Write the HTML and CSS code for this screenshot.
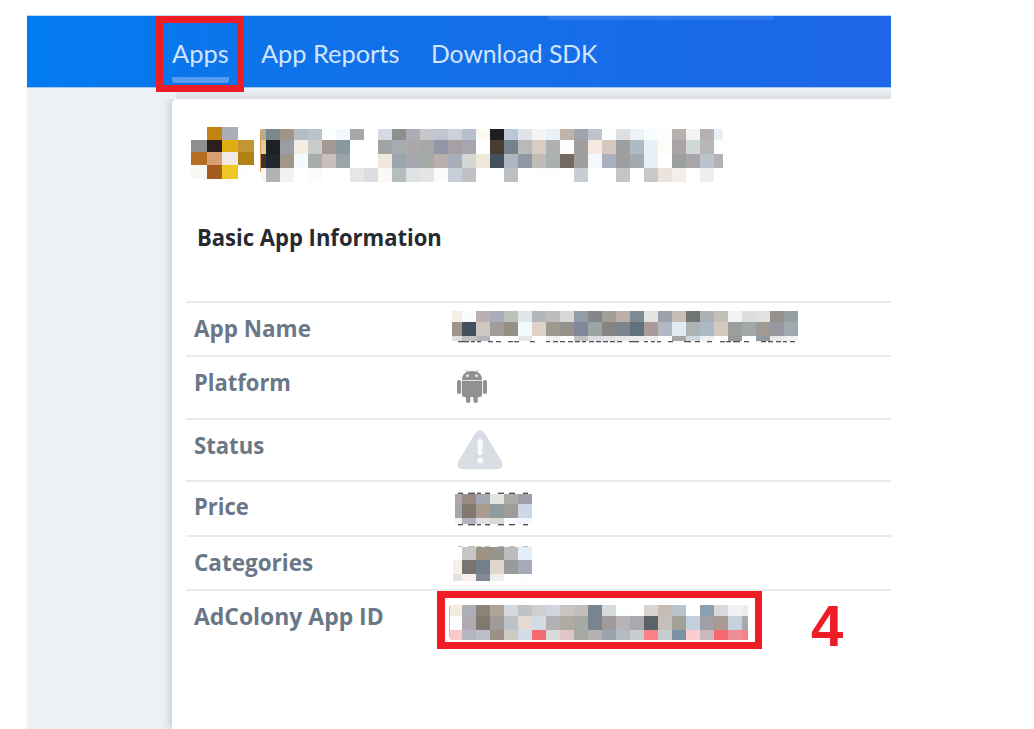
FILE: index.html
```html
<!DOCTYPE html>
<html lang="en">
<head>
<meta charset="utf-8">
<title>Basic App Information</title>
<link rel="stylesheet" href="styles.css">
</head>
<body>
<div class="shot">
  <nav class="nav">
    <span class="nav-item active"><span class="fit f-apps">Apps</span></span>
    <span class="nav-item reports"><span class="fit f-reports">App Reports</span></span>
    <span class="nav-item sdk"><span class="fit f-sdk">Download SDK</span></span>
    <i class="nav-pill"></i>
    <i class="mark mark-nav"></i>
  </nav>
  <div class="content">
    <i class="top-shade"></i>
    <main class="card">
      <header class="title">
        <svg class="logo" id="logo"></svg>
        <svg class="name" id="name"></svg>
      </header>
      <h2 class="heading"><span class="fit f-basic">Basic App Information</span></h2>
      <section class="rows">
        <div class="row r-name"><span class="label"><span class="fit f-name">App Name</span></span><svg class="value" id="appname"></svg></div>
        <div class="row r-platform"><span class="label"><span class="fit f-platform">Platform</span></span>
          <svg class="value" width="32" height="36" viewBox="0 0 32 36" fill="#8f9192">
            <path d="M6 12C6 6 10 3 16 3S26 6 26 12Z"/><path d="M11 4 10 1.5M21 4l1-2.5" stroke="#b9bbbc" stroke-width="1"/>
            <circle cx="11.5" cy="7.7" r="1.2" fill="#fff"/><circle cx="20.5" cy="7.7" r="1.2" fill="#fff"/>
            <path d="M6 12.7H26V27Q26 29 24 29H8Q6 29 6 27Z"/>
            <rect x="1" y="12" width="4.2" height="14" rx="2"/><rect x="26.8" y="12" width="4.2" height="14" rx="2"/>
            <rect x="10" y="26" width="4.4" height="9" rx="2"/><rect x="17.4" y="26" width="4.4" height="9" rx="2"/>
          </svg></div>
        <div class="row r-status"><span class="label"><span class="fit f-status">Status</span></span>
          <svg class="value" width="46" height="40" viewBox="0 0 46 40">
            <path d="M18 3.5Q23-2.8 28 3.5L44.5 31Q47.5 39 40 39.2H6Q-1.5 39 1.5 31Z" fill="#d8dde3"/>
            <path d="M20.3 9.5H26L25.2 25H21.1Z" fill="#f8fafb"/><circle cx="23.2" cy="30.5" r="2.9" fill="#f8fafb"/>
          </svg></div>
        <div class="row r-price"><span class="label"><span class="fit f-price">Price</span></span><svg class="value" id="price"></svg></div>
        <div class="row r-cat"><span class="label"><span class="fit f-cat">Categories</span></span><svg class="value" id="cats"></svg></div>
        <div class="row r-id"><span class="label"><span class="fit f-id">AdColony App ID</span></span><svg class="value" id="appid"></svg><i class="mark mark-id"></i><b class="step">4</b></div>
      </section>
    </main>
  </div>
</div>
<script src="mosaic.js"></script>
</body>
</html>
```

FILE: styles.css
```css
* { box-sizing: border-box; }
body { margin: 0; background: #fff; overflow: hidden; font-family: "Open Sans", "Noto Sans", sans-serif; }
svg { display: block; overflow: visible; flex: none; }
.shot { width: 864px; height: 714px; margin: 15px 0 0 27px; display: flex; flex-direction: column; }
.nav { position: relative; flex: none; height: 73px; padding-left: 145px; display: flex; border-top: 1px solid #b9d6fb; border-bottom: 1px solid #a3c9f8; background: linear-gradient(90deg, #027bf0 0, #0b75ec 22%, #136fea 50%, #1d66e7 100%); color: #d3e5fd; font-family: Lato, sans-serif; font-size: 25px; line-height: 30px; }
.nav-item { display: block; padding-top: 22px; white-space: nowrap; }
.active { width: 57px; height: 67px; border-radius: 3px; background: linear-gradient(#559df3, #559df3) 0 61px / 57px 6px no-repeat; }
.reports { margin-left: 32px; width: 138px; }
.sdk { margin-left: 32px; width: 166px; }
.nav-pill { position: absolute; left: 521px; top: 0; width: 226px; height: 4px; background: #2e79ec; border-radius: 0 0 5px 5px; }
.mark { position: absolute; border: 7px solid #ee1c24; z-index: 2; }
.mark-nav { left: 129px; top: 0; width: 88px; height: 76px; }
.fit { display: inline-block; white-space: nowrap; transform-origin: 0 50%; }
.content { position: relative; flex: 1; background: #eef1f6; padding: 11px 0 0 145px; }
.top-shade { position: absolute; left: 149px; right: 0; top: 1px; height: 10px; background: linear-gradient(#eceff4, #dcdfe5); }
.card { position: relative; height: 100%; background: #fff; border-radius: 5px 0 0 0; box-shadow: -3px 0 8px rgba(70, 80, 100, .22); clip-path: inset(0 0 0 -16px); padding: 28px 0 0 14px; }
.title { display: flex; gap: 7px; padding-left: 5px; height: 55px; }
.name { margin-top: 2px; }
.heading { margin: 38px 0 0 11px; height: 35px; font-size: 24px; line-height: 34px; font-weight: 700; color: #272a30; }
.rows { margin-top: 46px; }
.row { position: relative; display: flex; align-items: flex-start; border-top: 2px solid #e7ebef; }
.label { width: 258px; padding-left: 8px; font-size: 24px; line-height: 34px; font-weight: 700; color: #6a7787; }
.r-name { height: 54px; padding-top: 8px; } .r-name .value { margin-left: 8px; }
.r-platform { height: 63px; padding-top: 8px; } .r-platform .value { margin: 3px 0 0 12px; }
.r-status { height: 62px; padding-top: 8px; } .r-status .value { margin: 2px 0 0 13px; }
.r-price { height: 55px; padding-top: 7px; } .r-price .value { margin: 5px 0 0 11px; }
.r-cat { height: 54px; padding-top: 8px; } .r-cat .value { margin: 2px 0 0 9px; }
.r-id { height: 60px; padding-top: 8px; } .r-id .value { margin: 6px 0 0 6px; }
.mark-id { left: 251px; top: 0; width: 325px; height: 58px; border-width: 7px 7px 7px 8px; }
.step { position: absolute; left: 625px; top: 3px; font: bold 58px/64px "Liberation Sans", sans-serif; color: #ee1c24; }
```

FILE: mosaic.js
```js
// xs / ys are the cell edges; each row lists six-digit colours, "-" leaves a gap.
function mosaic(id, xs, ys, rows, marks) {
  const svg = document.getElementById(id);
  svg.setAttribute("width", xs[xs.length - 1] - xs[0]);
  svg.setAttribute("height", ys[ys.length - 1] - ys[0]);
  let out = "";
  (marks || []).forEach(m => {
    out += `<rect x="${m[0] - xs[0]}" y="${m[1] - ys[0]}" width="${m[2]}" height="${m[3]}" fill="${m[4] || "#555"}"/>`;
  });
  rows.forEach((row, r) => row.split(" ").forEach((c, i) => {
    if (c !== "-") out += `<rect x="${xs[i] - xs[0]}" y="${ys[r] - ys[0]}" width="${xs[i + 1] - xs[i]}" height="${ys[r + 1] - ys[r]}" fill="#${c}" shape-rendering="crispEdges"/>`;
  }));
  svg.innerHTML = out;
}
function edges(start, end) {
  const a = [start];
  for (let x = Math.floor(start / 14) * 14 + 14; x < end; x += 14) a.push(x);
  a.push(end);
  return a;
}
mosaic("logo", [191, 207, 222, 238, 254], [127, 140, 152, 165, 179], [
  "- c18312 abaeb8 -",
  "8f8f8d 2c1f1c dfae12 c39533",
  "b56d20 d79e70 f2e8e5 b38112",
  "f9f8f4 a35c1b edc825 fefefe"
]);
mosaic("name", edges(261, 723), edges(129, 182), [
  "b5ab9d 7b878c a19589 b5bdc4 bac4ca fdfefe f2f9fc a9a7a8 ffffff d6dbe3 8f8f8d aeadb5 c8c6c8 bfc5d1 ced1db b7bfcf fcf8f3 1e1f21 bbc6d6 dfe3ea f6f3f2 e9f1f8 bfb3ab 9fa5ae c1c3cc fbffff dfdfe0 edf2f6 f7fcfd fdfefe b8afae f3f3f3 b5b2b6 e9eef7",
  "e4cb9c 1d2224 9a9ca6 f4ebe2 c8cbc8 a29995 8a989f ffffff ffffff 9fa4a5 a5abae aaa8a9 a5a9a5 9397a5 a4a0a4 a7a5ad ffffff 473d30 73828d b9bab8 d7cdc5 b0b0b0 fffefd 9f9f9f f5eae1 d6c7bf 9d9fa0 adbbc5 e8f0f8 fcfdf7 a9a3a3 d0d9d9 b9b5b4 fbfdff",
  "3d352c 20272e a19689 f5faff a7aca8 cbbfbb 99a6a9 ffffff ffffff f1e8dd 9ba5ae a9a7b0 a5aaa7 b9afaf a8afbb d6d6d3 f1e8dc 43515e aeb6c1 9197a3 c0bcb7 a9b0af 736960 9f9f9f f2f8fd abb0be 9f9fa0 a4aaad e8f0f8 ffffff 9aa09f aaa5a8 bbc3cc b4b1b5",
  "fbf6f0 b0b3b3 f1f1f1 ffffff fbfbfb ffffff ffffff e6e6e7 dcdde2 faf9f5 b6bebd dee2e4 e4e6e6 f9fcfb c6ced7 c1c0c5 ffffff ffffff bbc0c4 ffffff fefefe fefefe ffffff c8ccd5 ffffff ffffff c4c5c4 ffffff c7c8c8 ece3dd f3efec ffffff f1eded ffffff"
], [[260, 130, 1, 42, "#d99b48"]]);
const dashes = [458, 11, 471, 4, 477, 4, 488, 5, 496, 5, 508, 5, 514, 5, 530, 5, 546, 4, 553, 5, 560, 5, 568, 5, 575, 5, 582, 4, 589, 5, 596, 5, 603, 5, 610, 5, 617, 5, 629, 10, 644, 4, 651, 4, 657, 4, 668, 5, 684, 7, 695, 5, 707, 5, 720, 5, 726, 5, 733, 7, 744, 5, 761, 5, 768, 5, 776, 5, 783, 4, 790, 5];
const nameMarks = [];
for (let i = 0; i < dashes.length; i += 2) nameMarks.push([dashes[i], 341, dashes[i + 1], 1.3]);
mosaic("appname", edges(452, 798), [311, 322, 336, 341], [
  "f4efe4 fafafa bab0af a9adb9 bdbfb9 e0e6e7 b1b6ba bfbcbf d8d8d9 919da7 858689 a29e9a bbaea6 7d8b94 e4e4e2 9ba2ae c7beb3 717575 adb1b1 c2bfb8 f2f2f2 dcdddf e2e2e2 95918c 969fa0",
  "9f938a 43515e cfc6c2 9f9c9a 949184 f2f9fc dfd1c7 9e9a8f 97918d 7f8798 99a5a3 858480 7c858d 61717d a99c98 b4b7c5 e0ecf2 adb2b2 acbac5 d2cabf 9b9e9b a2a8aa a09b92 9798a2 a0a9b0",
  "dfdddd c3bec0 b7b3bf ffffff ffffff e3e7e6 ffffff f1f1f1 ffffff c7c1be dadde2 e1e3e4 e5e7e9 e8ebec edeeef ffffff a5a5a4 d0d8e0 eef0f0 ffffff 9d9794 ffffff 929ba3 e8e9ea f1f1f2"
], nameMarks);
const priceMarks = [];
[[458, 5], [468, 7], [477, 4], [485, 5], [498, 6], [509, 6], [523, 5]].forEach(m => {
  priceMarks.push([m[0], 492.6, m[1], 1.4], [m[0], 524, m[1], 1.4]);
});
mosaic("price", edges(455, 532), [494, 504, 518, 524], [
  "aaa8ad 998b81 a2a9b4 e4e6e1 abacaa 9da0aa",
  "a8a5aa 817970 a99b8e 8e9b9f a09c99 cdd8e6",
  "f5f2e9 b4b2bf e0e0e2 dbd7d1 fbfcff f2f5fc"
], priceMarks);
mosaic("cats", edges(453, 532), [547, 560, 574, 581], [
  "- c6c6c7 9f9385 97958d bcbbbe e2edf7",
  "f4f0e5 7a7470 75808d dfd7cc 999a9e a4abb7",
  "e4e1e2 f9eff0 828997 efefed ffffff fdfdfd"
], [[458, 546, 4, 1, "#bbb"], [468, 546, 7, 1, "#bbb"], [477, 546, 4, 1, "#bbb"], [485, 546, 5, 1, "#bbb"], [498, 546, 6, 1, "#bbb"], [509, 546, 6, 1, "#bbb"], [523, 546, 5, 1, "#bbb"]]);
mosaic("appid", edges(450, 748), [605, 616, 630, 640], [
  "f4ebe1 afadb8 8b827a aea598 d4d9dd c1c2c7 cfcfcf d0d5de c8c5c0 c4bebb 788591 dad9da f9ffff ffffff d9d4cf c5bcb6 bac2ca ffffff 8b9fae dad9da eff1f6 ececec",
  "fafdfc b0abb0 817970 9f9998 bbc3c6 e3dad2 d4dbe7 b1b0b2 aeab9f a5aaa6 788591 a09b9b b6b4b6 aba9ae 5b6268 c4bfb9 a3a098 c1cfde 9da1a6 a99b92 c7d1de a5aaab",
  "f9c8c9 b4b5bf babec8 9c9086 cdcac3 d3dde9 f66a70 d8dcda e0c5c7 a7a8a2 b6b1af 9aa3ad b5bac2 c9cdd1 f98288 c7cccd 7b8fa5 fbcdd0 cbb8bf f5686f ec8e94 f87f85"
], [[449, 606, 1, 31, "#d5c08b"]]);

const widths = {
  "f-apps": 57, "f-reports": 138, "f-sdk": 166, "f-basic": 245, "f-name": 117, "f-platform": 97,
  "f-status": 70, "f-price": 55, "f-cat": 119, "f-id": 190
};
for (const k in widths) {
  const el = document.querySelector("." + k);
  el.style.transform = `scaleX(${widths[k] / el.offsetWidth})`;
}
```
